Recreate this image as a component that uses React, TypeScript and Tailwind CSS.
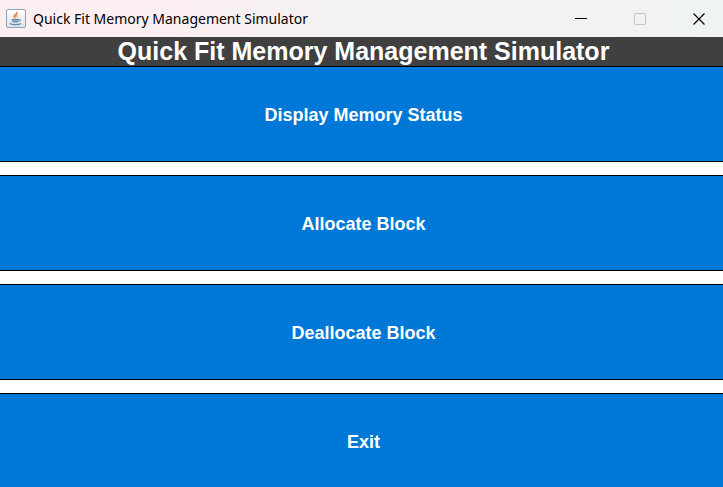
import type { ReactNode } from "react";

const actions = ["Display Memory Status", "Allocate Block", "Deallocate Block", "Exit"];

function JavaIcon() {
  return (
    <svg className="h-5 w-5 shrink-0" viewBox="0 0 20 20" fill="none" aria-hidden="true">
      <defs>
        <linearGradient id="tile" x1="0" y1="0" x2="0" y2="1">
          <stop offset="0" stopColor="#ffffff" />
          <stop offset="1" stopColor="#dae4eb" />
        </linearGradient>
      </defs>
      <rect x="0.5" y="0.5" width="19" height="18" rx="1.5" fill="url(#tile)" stroke="#8ba5bb" />
      <path d="M10.600 2.800c1 2-3.900 2.800-3 5.200.3.8 1.200 1.400 1.800 2-.3-1.200-.6-1.800.3-2.800C10.900 5.900 12.300 4.800 10.600 2.800Z" fill="#e98a42" stroke="#e98a42" strokeWidth="0.600" />
      <path d="M12.500 5.500c-2.200 1-2.800 1.800-1.800 3 .5.7.2 1.200-.3 1.700 2.200-1 1.300-2 .9-2.700-.3-.7.300-1.200 1.200-2Z" fill="#efab70" />
      <path d="M5.500 10.400h7.500c0 1.800-.8 3-2 3.400H7.500c-1.200-.4-2-1.600-2-3.400Z" fill="#87a4ba" />
      <path d="M5.500 10.500h7.500" stroke="#6c8ea9" />
      <path d="M13 10.500c2.600-.5 2.400 1.700-.6 2.100" stroke="#6c8ea9" strokeWidth="0.900" />
      <path d="M4 14.300c1.500 1.800 9.500 1.800 11 0" stroke="#6c8ea9" strokeWidth="1.300" />
    </svg>
  );
}

function WindowButton({ label, disabled, children }: { label: string; disabled?: boolean; children: ReactNode }) {
  return (
    <button type="button" aria-label={label} disabled={disabled} className="flex h-full w-12 items-center justify-center">
      <svg className="h-3 w-3" viewBox="0 0 12 12" fill="none" aria-hidden="true">
        {children}
      </svg>
    </button>
  );
}

export default function App() {
  return (
    <div className="flex h-screen flex-col overflow-hidden bg-white font-['Liberation_Sans',Arial,sans-serif]">
      <header className="flex h-[37px] shrink-0 items-center justify-between bg-linear-to-r from-[#fbeff1] from-25% via-[#f3f2f2] via-50% to-[#f0f3f3] pl-1.5">
        <div className="flex items-center gap-[7px]">
          <JavaIcon />
          <span className="font-['Noto_Sans','Segoe_UI',sans-serif] text-sm whitespace-nowrap text-black">
            Quick Fit Memory Management Simulator
          </span>
        </div>
        <div className="flex h-full gap-[11px]">
          <WindowButton label="Minimize">
            <path d="M0 5.500h12" stroke="#000" />
          </WindowButton>
          <WindowButton label="Maximize" disabled>
            <rect x="0.5" y="0.5" width="11" height="11" rx="0.800" stroke="#c3c3c3" />
          </WindowButton>
          <WindowButton label="Close">
            <path d="M.5.5l11 11M11.500.5l-11 11" stroke="#000" strokeWidth="1.200" />
          </WindowButton>
        </div>
      </header>
      <h1 className="shrink-0 bg-[#404040] pl-1 text-center text-[25px] leading-[29px] font-bold whitespace-nowrap text-white">
        Quick Fit Memory Management Simulator
      </h1>
      <main className="-mb-0.5 grid flex-1 auto-rows-fr gap-[13px]">
        {actions.map((action) => (
          <button
            key={action}
            type="button"
            className="border-y border-black bg-[#0078d7] pt-0.5 pl-1 text-lg leading-5 font-bold text-white"
          >
            {action}
          </button>
        ))}
      </main>
    </div>
  );
}
